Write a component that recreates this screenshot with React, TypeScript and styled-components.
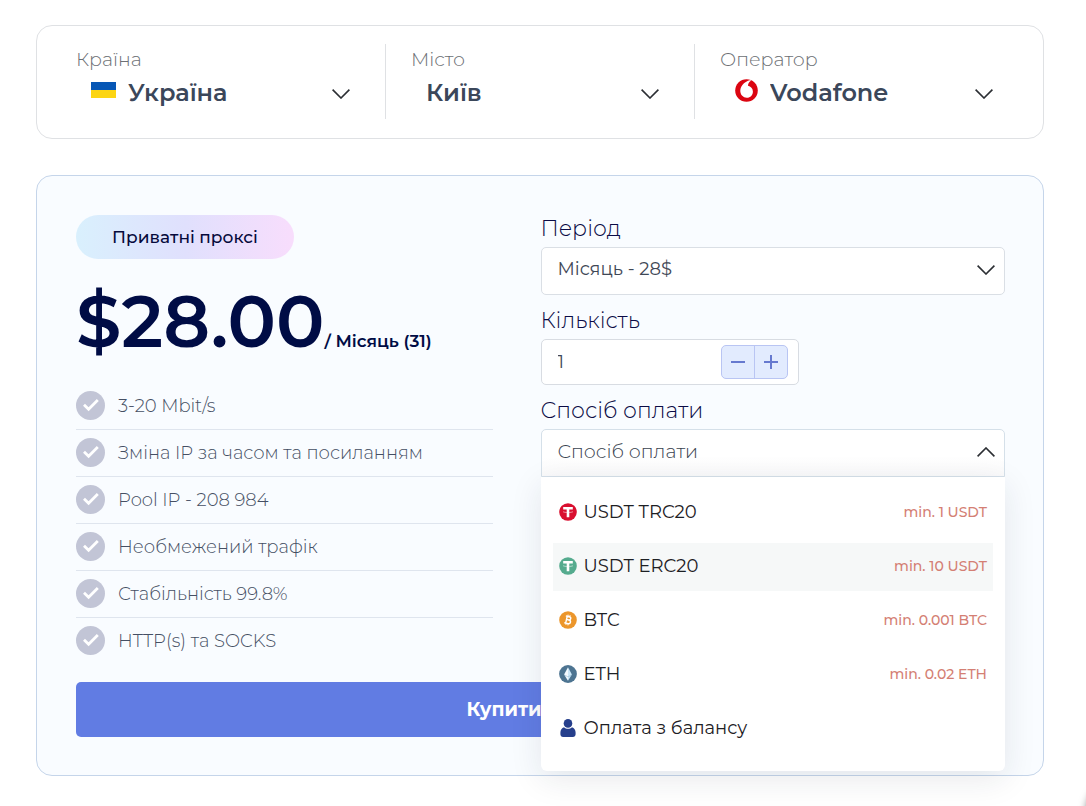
import React, { useState } from "react";
import styled, { createGlobalStyle } from "styled-components";

const GlobalStyle = createGlobalStyle`
  *, *::before, *::after { box-sizing: border-box; }
  body {
    margin: 0;
    background: #fff;
    color: #212529;
    font-family: Montserrat, Inter, "Liberation Sans", sans-serif;
    font-size: 18px;
  }
  button, select, input { font: inherit; color: inherit; }
`;

const Page = styled.main`
  padding: 25px 42px 30px 36px;
  display: flex;
  flex-direction: column;
  gap: 36px;
`;

const FilterCard = styled.section`
  display: grid;
  grid-template-columns: repeat(3, 1fr);
  padding: 18px 40px 19px 39px;
  border: 1px solid #dfe1e4;
  border-radius: 16px;
`;

const Filter = styled.div`
  display: flex;
  flex-direction: column;
  height: 75px;
  padding: 4px 25px 0;
  border-left: 1px solid #dfe1e4;
  &:first-child { padding-left: 0; border-left: 0; }
  &:last-child { padding-right: 0; }
`;

const FilterLabel = styled.label`
  font-size: 19px;
  font-weight: 300;
  line-height: 24px;
  color: #6c6f74;
`;

const ChevronSvg = styled.svg`
  position: absolute;
  right: 10px;
  top: 50%;
  margin-top: -6px;
  width: 18px;
  height: 10px;
  pointer-events: none;
`;

const SelectWrap = styled.div`
  position: relative;
  display: flex;
  align-items: center;
`;

const FilterSelectWrap = styled(SelectWrap)`
  gap: 12px;
  height: 40px;
  padding-left: 15px;
  ${ChevronSvg} { margin-top: -3px; }
`;

const FilterIcon = styled.svg`
  flex: none;
  margin-bottom: 4px;
`;

const FilterSelect = styled.select`
  flex: 1;
  min-width: 0;
  height: 40px;
  padding: 0 40px 0 0;
  border: 0;
  background: transparent;
  appearance: none;
  font-size: 24px;
  font-weight: 600;
  color: #3b475a;
`;

const PlanCard = styled.section`
  padding: 39px 38px 38px 39px;
  border: 1px solid #c5d5ea;
  border-radius: 16px;
  background: #f9fcff;
`;

const PlanColumns = styled.div`
  display: grid;
  grid-template-columns: 1fr 1fr;
`;

const Summary = styled.div`
  padding-right: 48px;
`;

const Badge = styled.span`
  display: flex;
  align-items: center;
  justify-content: center;
  width: 218px;
  height: 44px;
  border-radius: 22px;
  background: linear-gradient(90deg, #d9f0fd, #e0e0fd 50%, #f8ddfc);
  font-size: 17px;
  font-weight: 500;
  color: #060a3c;
`;

const Price = styled.p`
  display: flex;
  align-items: baseline;
  height: 76px;
  margin: 24px 0;
  font-size: 72px;
  font-weight: 600;
  line-height: 76px;
  white-space: nowrap;
  color: #000c45;
`;

const PriceTerm = styled.span`
  font-size: 17px;
  font-weight: 600;
  line-height: 24px;
`;

const FeatureList = styled.ul`
  margin: 0;
  padding: 0;
  list-style: none;
`;

const Feature = styled.li`
  display: flex;
  align-items: center;
  gap: 13px;
  height: 47px;
  border-bottom: 1px solid #dfe5ee;
  font-size: 18px;
  font-weight: 300;
  color: #454f63;
  &:last-child { height: 46px; border-bottom: 0; }
`;

const FeatureMark = styled.svg`
  flex: none;
  margin-bottom: 2px;
`;

const Form = styled.div`
  display: flex;
  flex-direction: column;
  gap: 12px;
`;

const Field = styled.div`
  position: relative;
  display: flex;
  flex-direction: column;
  gap: 4px;
`;

const FieldLabel = styled.label`
  font-size: 22px;
  font-weight: 300;
  line-height: 28px;
  color: #0b0b45;
`;

const PeriodSelect = styled.select`
  flex: 1;
  min-width: 0;
  height: 48px;
  padding: 0 40px 4px 16px;
  border: 1px solid #dadfe5;
  border-radius: 5px;
  background: #fff;
  appearance: none;
  font-size: 18px;
  color: #3f4856;
`;

const QuantityBox = styled.div`
  display: flex;
  align-items: center;
  width: 258px;
  height: 46px;
  padding: 0 10px 0 16px;
  border: 1px solid #d8dce2;
  border-radius: 5px;
  background: #fff;
`;

const QuantityInput = styled.input`
  flex: 1;
  min-width: 0;
  padding: 0;
  border: 0;
  background: transparent;
  color: #3f4856;
`;

const Stepper = styled.div`
  display: flex;
  width: 67px;
  height: 34px;
  border: 1px solid #b9c5f3;
  border-radius: 5px;
  background: #e2ebfe;
`;

const StepButton = styled.button`
  flex: 1;
  display: flex;
  align-items: center;
  justify-content: center;
  padding: 0;
  border: 0;
  background: transparent;
  cursor: pointer;
  & + & { border-left: 1px solid #b9c5f3; }
`;

const MethodButton = styled.button<{ $open: boolean }>`
  flex: 1;
  height: 48px;
  padding: 0 40px 4px 16px;
  border: 1px solid #d5e0e9;
  border-radius: ${(p) => (p.$open ? "5px 5px 0 0" : "5px")};
  background: linear-gradient(#fff 60%, #fafafb);
  text-align: left;
  font-size: 19px;
  font-weight: 300;
  color: #3a4350;
  cursor: pointer;
`;

const MethodList = styled.ul`
  position: absolute;
  z-index: 2;
  top: 100%;
  left: 0;
  right: 0;
  display: flex;
  flex-direction: column;
  gap: 6px;
  margin: 0;
  padding: 12px 12px 18px;
  border-radius: 0 0 6px 6px;
  background: #fff;
  box-shadow: 0 8px 32px rgba(30, 35, 60, 0.1);
  list-style: none;
`;

const Method = styled.li<{ $active: boolean }>`
  display: flex;
  align-items: center;
  gap: 7px;
  height: 48px;
  padding: 0 6px 2px;
  background: ${(p) => (p.$active ? "#f6f8f8" : "transparent")};
  font-size: 18px;
  line-height: 24px;
  color: #1d2024;
  cursor: pointer;
`;

const Minimum = styled.span`
  margin-left: auto;
  font-size: 14px;
  font-weight: 500;
  color: #d47f74;
`;

const BuyButton = styled.button`
  display: block;
  width: 100%;
  height: 55px;
  margin-top: 18px;
  border: 0;
  border-radius: 5px;
  background: #617ce3;
  font-size: 19px;
  font-weight: 700;
  color: #fff;
  cursor: pointer;
`;

const HelpButton = styled.button`
  position: fixed;
  right: -61px;
  bottom: -36px;
  width: 60px;
  height: 60px;
  border: 0;
  border-radius: 50%;
  background: #fff;
  box-shadow: 0 0 8px rgba(0, 0, 0, 0.6);
`;

const Chevron = ({ up = false }: { up?: boolean }) => (
  <ChevronSvg viewBox="0 0 18 10" fill="none" stroke="#2b2e33" strokeWidth="1.6" aria-hidden="true">
    <path d={up ? "M0.6 9.4 9 1l8.4 8.4" : "M0.6 0.6 9 9l8.4-8.4"} />
  </ChevronSvg>
);

const UkraineFlag = () => (
  <FilterIcon width="25" height="16" viewBox="0 0 25 16" aria-hidden="true">
    <path fill="#0757b5" d="M0 0h25v8H0z" />
    <path fill="#fcd513" d="M0 8h25v8H0z" />
  </FilterIcon>
);

const OperatorLogo = () => (
  <FilterIcon width="23" height="23" viewBox="0 0 23 23" aria-hidden="true">
    <circle cx="11.5" cy="11.5" r="11.3" fill="#db0511" />
    <path
      fill="#fff"
      d="M15.4.9C12 1.7 9.3 3.400 7.400 6c-1.500 2-2.200 4.100-2.100 6.300.2 3.800 3 6.500 6.600 6.400 3.600-.1 6.100-2.900 6-6.300-.1-3.200-2.100-5-4.900-5.700.1-1.900.9-3.700 2.900-5z"
    />
  </FilterIcon>
);

const CheckCircle = () => (
  <FeatureMark width="29" height="29" viewBox="0 0 29 29" aria-hidden="true">
    <circle cx="14.5" cy="14.5" r="14.5" fill="#c2c5d6" />
    <path d="M8 13.800l4.600 4.500L21.800 9" fill="none" stroke="#fff" strokeWidth="2.8" />
  </FeatureMark>
);

const TetherIcon = ({ color }: { color: string }) => (
  <svg width="18" height="18" viewBox="0 0 18 18" aria-hidden="true">
    <circle cx="9" cy="9" r="8.8" fill={color} />
    <path fill="#fff" d="M4.200 4h9.600v2.500h-3.500v7.700H7.700V6.500H4.200z" />
    <path d="M4 8.600c1 1.200 9 1.200 10 0" fill="none" stroke="#fff" strokeOpacity=".6" strokeWidth=".9" />
  </svg>
);

const BitcoinIcon = () => (
  <svg width="18" height="18" viewBox="0 0 18 18" aria-hidden="true">
    <circle cx="9" cy="9" r="8.8" fill="#ec962b" />
    <g transform="rotate(13 9 9)" fill="none" stroke="#fff" strokeWidth="1.4">
      <path d="M6 5.500h3.500c2.500 0 2.500 3.300 0 3.300H7.300M7.300 8.800h2.500c2.800 0 2.800 3.700 0 3.700H6M7.400 5.500v7" />
      <path strokeWidth="1" d="M8 3.800v1.700M10 3.800v1.700M8 12.500v1.700M10 12.500v1.700" />
    </g>
  </svg>
);

const EthereumIcon = () => (
  <svg width="18" height="18" viewBox="0 0 18 18" aria-hidden="true">
    <circle cx="9" cy="9" r="8.9" fill="#4d7491" />
    <path fill="#f4faff" d="M9 2.300 5.100 9.500 9 15.700z" />
    <path fill="#cde8f9" d="M9 2.300l3.900 7.200L9 15.700z" />
    <path fill="none" stroke="#8fb4cc" strokeWidth=".5" d="M5.300 9.800 9 11.900l3.700-2.100" />
  </svg>
);

const UserIcon = () => (
  <svg width="18" height="18" viewBox="0 0 18 18" fill="#263f8c" aria-hidden="true">
    <circle cx="9" cy="4.4" r="4.3" />
    <path d="M5 8.300c2.300 2 5.700 2 8 0 2.200.7 3.600 2.700 3.600 5.200v1.700c0 1.600-1.100 2.700-2.700 2.700H4.100c-1.600 0-2.700-1.100-2.700-2.700v-1.700c0-2.500 1.400-4.500 3.600-5.200z" />
  </svg>
);

const features = [
  "3-20 Mbit/s",
  "Зміна IP за часом та посиланням",
  "Pool IP - 208 984",
  "Необмежений трафік",
  "Стабільність 99.8%",
  "HTTP(s) та SOCKS",
];

const methods = [
  { name: "USDT TRC20", min: "min. 1 USDT", icon: <TetherIcon color="#d90f2f" /> },
  { name: "USDT ERC20", min: "min. 10 USDT", icon: <TetherIcon color="#55ab8e" /> },
  { name: "BTC", min: "min. 0.001 BTC", icon: <BitcoinIcon /> },
  { name: "ETH", min: "min. 0.02 ETH", icon: <EthereumIcon /> },
  { name: "Оплата з балансу", min: "", icon: <UserIcon /> },
];

export default function App() {
  const [open, setOpen] = useState(true);
  const [active, setActive] = useState(1);
  const [quantity, setQuantity] = useState(1);

  return (
    <>
      <GlobalStyle />
      <Page>
        <FilterCard>
          <Filter>
            <FilterLabel htmlFor="country">Країна</FilterLabel>
            <FilterSelectWrap>
              <UkraineFlag />
              <FilterSelect id="country">
                <option>Україна</option>
              </FilterSelect>
              <Chevron />
            </FilterSelectWrap>
          </Filter>
          <Filter>
            <FilterLabel htmlFor="city">Місто</FilterLabel>
            <FilterSelectWrap>
              <FilterSelect id="city">
                <option>Київ</option>
              </FilterSelect>
              <Chevron />
            </FilterSelectWrap>
          </Filter>
          <Filter>
            <FilterLabel htmlFor="operator">Оператор</FilterLabel>
            <FilterSelectWrap>
              <OperatorLogo />
              <FilterSelect id="operator">
                <option>Vodafone</option>
              </FilterSelect>
              <Chevron />
            </FilterSelectWrap>
          </Filter>
        </FilterCard>

        <PlanCard>
          <PlanColumns>
            <Summary>
              <Badge>Приватні проксі</Badge>
              <Price>
                $28.00
                <PriceTerm>/ Місяць (31)</PriceTerm>
              </Price>
              <FeatureList>
                {features.map((text) => (
                  <Feature key={text}>
                    <CheckCircle />
                    {text}
                  </Feature>
                ))}
              </FeatureList>
            </Summary>

            <Form>
              <Field>
                <FieldLabel htmlFor="period">Період</FieldLabel>
                <SelectWrap>
                  <PeriodSelect id="period">
                    <option>Місяць - 28$</option>
                  </PeriodSelect>
                  <Chevron />
                </SelectWrap>
              </Field>
              <Field>
                <FieldLabel htmlFor="quantity">Кількість</FieldLabel>
                <QuantityBox>
                  <QuantityInput
                    id="quantity"
                    inputMode="numeric"
                    value={quantity}
                    onChange={(e) => setQuantity(Number(e.target.value) || 1)}
                  />
                  <Stepper>
                    <StepButton type="button" aria-label="Менше" onClick={() => setQuantity(Math.max(1, quantity - 1))}>
                      <svg width="14" height="14" viewBox="0 0 14 14" stroke="#6679cf" strokeWidth="2">
                        <path d="M0 7h14" />
                      </svg>
                    </StepButton>
                    <StepButton type="button" aria-label="Більше" onClick={() => setQuantity(quantity + 1)}>
                      <svg width="14" height="14" viewBox="0 0 14 14" stroke="#6679cf" strokeWidth="2">
                        <path d="M0 7h14M7 0v14" />
                      </svg>
                    </StepButton>
                  </Stepper>
                </QuantityBox>
              </Field>
              <Field>
                <FieldLabel htmlFor="method">Спосіб оплати</FieldLabel>
                <SelectWrap>
                  <MethodButton
                    id="method"
                    type="button"
                    $open={open}
                    aria-haspopup="listbox"
                    aria-expanded={open}
                    onClick={() => setOpen(!open)}
                  >
                    Спосіб оплати
                  </MethodButton>
                  <Chevron up={open} />
                </SelectWrap>
                {open && (
                  <MethodList role="listbox" aria-labelledby="method">
                    {methods.map((m, i) => (
                      <Method
                        key={m.name}
                        role="option"
                        aria-selected={i === active}
                        $active={i === active}
                        onMouseEnter={() => setActive(i)}
                      >
                        {m.icon}
                        {m.name}
                        {m.min && <Minimum>{m.min}</Minimum>}
                      </Method>
                    ))}
                  </MethodList>
                )}
              </Field>
            </Form>
          </PlanColumns>
          <BuyButton type="button">Купити проксі</BuyButton>
        </PlanCard>
      </Page>
      <HelpButton type="button" aria-label="Чат" />
    </>
  );
}
